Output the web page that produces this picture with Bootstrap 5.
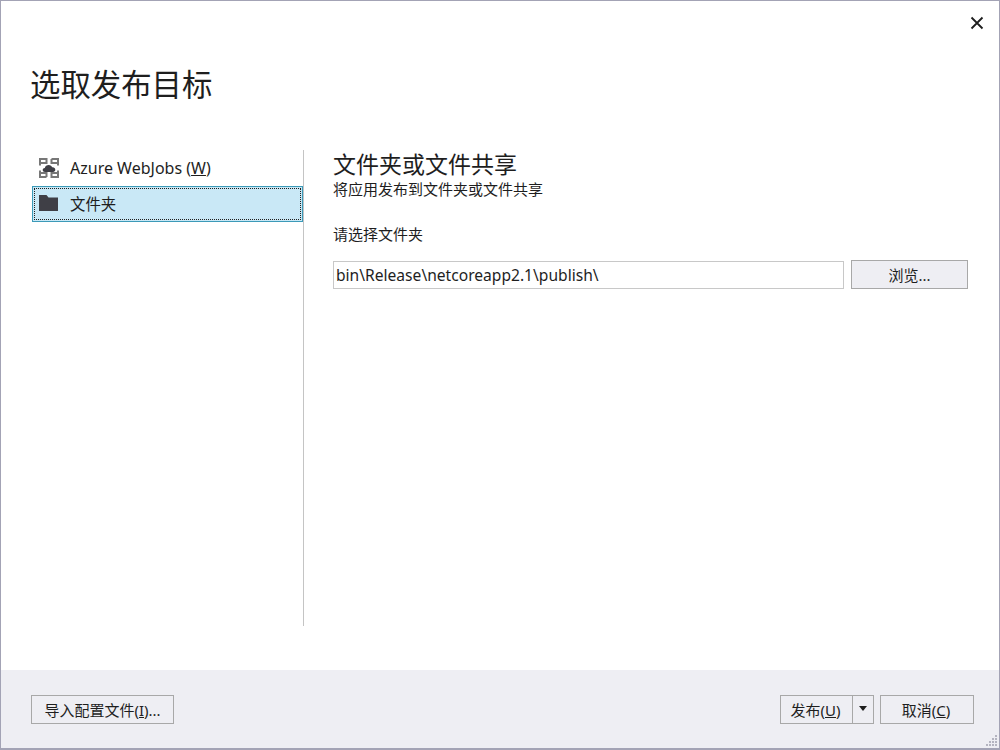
<!DOCTYPE html>
<html lang="zh-CN">
<head>
  <meta charset="UTF-8">
  <title>选取发布目标</title>
  <link href="https://cdn.jsdelivr.net/npm/bootstrap@5.3.3/dist/css/bootstrap.min.css" rel="stylesheet">
  <style>
    html, body { height: 100%; }
    body { margin: 0; background: #fff; color: #1e1e1e; font-family: "Noto Sans", "Noto Sans CJK SC", sans-serif; overflow: hidden; }
    .dlg-window { width: 1000px; height: 750px; border: 1px solid #a3a3b5; border-bottom-width: 2px; }
    .dlg-top { height: 149px; padding: 14px 14px 0 29px; }
    .dlg-close { background: none; border: 0; padding: 0; width: 16px; height: 16px; line-height: 0; }
    .dlg-title { font-size: 30.4px; line-height: 42px; font-weight: 400; margin: 33px 0 0; }
    .dlg-main { height: 520px; padding-left: 31px; }
    .target-list { width: 271px; }
    .target-item { height: 36px; font-size: 16px; gap: 9px; padding-left: 5px; color: #1e1e1e; line-height: 24px; }
    .target-item.picked { background: #c9e8f6; border: 1px solid #3c9ab8; outline: 1px dotted #1e1e1e; outline-offset: -3px; padding-left: 4px; font-size: 15.4px; }
    .target-item.picked span { position: relative; top: 1px; }
    .dlg-divider { width: 1px; height: 476px; background: #c4c4c4; }
    .dlg-pane { padding-left: 29px; width: 665px; }
    .pane-title { font-size: 23px; line-height: 30px; font-weight: 400; margin: -1px 0 1px; }
    .pane-sub { font-size: 15px; line-height: 20px; margin-top: -1px; }
    .pane-label { font-size: 15px; line-height: 20px; margin: 25px 0 16px; }
    .path-input { width: 511px; height: 28px; padding: 0 2px; border: 1px solid #c8c8c8; border-radius: 0; font-size: 15.6px; color: #1e1e1e; font-family: inherit; margin-top: 1px; }
    .path-input:focus { box-shadow: none; border-color: #c8c8c8; }
    .dlg-btn { background: #eeeef3; border: 1px solid #a8a8a8; border-radius: 0; height: 29px; padding: 0; font-size: 15px; line-height: 26px; color: #1e1e1e; }
    .btn-browse { width: 117px; margin-left: -1px; }
    .dlg-foot { height: 78px; background: #eeeef3; padding: 25px 25px 0 30px; position: relative; }
    .btn-import { width: 143px; }
    .btn-publish { width: 73px; padding-right: 2px; }
    .btn-caret { width: 21px; border-left: 0; }
    .btn-caret i { display: block; width: 0; height: 0; margin: 0 auto 3px; border: 4px solid transparent; border-top: 5px solid #1e1e1e; border-bottom: 0; }
    .btn-cancel { width: 94px; margin-left: 6px; padding-right: 2px; }
    .resize-grip { position: absolute; right: 1px; bottom: 1px; }
  </style>
</head>
<body>

<div class="dlg-window d-flex flex-column">
  <!-- title area -->
  <div class="dlg-top">
    <div class="d-flex justify-content-end">
      <button class="dlg-close" type="button" aria-label="Close">
        <svg width="14" height="14" viewBox="0 0 14 14"><path d="M1.500 1.500 L12.500 12.500 M12.500 1.500 L1.500 12.500" stroke="#1e1e1e" stroke-width="1.8" fill="none"/></svg>
      </button>
    </div>
    <h1 class="dlg-title">选取发布目标</h1>
  </div>

  <div class="dlg-main d-flex">
    <!-- targets -->
    <div class="target-list">
      <div class="target-item d-flex align-items-center">
        <svg width="24" height="24" viewBox="0 0 24 24">
          <g fill="none" stroke="#777" stroke-width="2">
            <path d="M3 9.500V3h6.500v4H3M14.500 3H21v6.500M14.500 3v4H21M21 14.500V21h-6.500v-4H21M9.500 21H3v-6.500M9.500 21v-4H3"/>
          </g>
          <path d="M8 16c-1.500 0-2.300-.9-2.300-2S6.600 12 7.800 12c.3-1.800 2-3 3.900-3 1.800 0 3 1 3.500 2.300 1.800-.2 3.100.9 3.100 2.500 0 1.300-.9 2.200-2.200 2.200z" fill="#3f3f46"/>
        </svg>
        <span>Azure WebJobs (<u>W</u>)</span>
      </div>
      <div class="target-item picked d-flex align-items-center">
        <svg width="24" height="24" viewBox="0 0 24 24">
          <path d="M2 3h7.500l2 2.500H21V19H2z" fill="#3f3f46"/>
        </svg>
        <span>文件夹</span>
      </div>
    </div>

    <div class="dlg-divider"></div>

    <!-- folder pane -->
    <div class="dlg-pane">
      <h2 class="pane-title">文件夹或文件共享</h2>
      <div class="pane-sub">将应用发布到文件夹或文件共享</div>
      <div class="pane-label">请选择文件夹</div>
      <div class="d-flex align-items-start gap-2">
        <input type="text" class="form-control path-input" value="bin\Release\netcoreapp2.1\publish\">
        <button class="btn dlg-btn btn-browse" type="button">浏览...</button>
      </div>
    </div>
  </div>

  <!-- footer buttons -->
  <div class="dlg-foot d-flex justify-content-between align-items-start">
    <button class="btn dlg-btn btn-import" type="button">导入配置文件(<u>I</u>)...</button>
    <div class="d-flex">
      <button class="btn dlg-btn btn-publish" type="button">发布(<u>U</u>)</button>
      <button class="btn dlg-btn btn-caret" type="button" aria-label="More"><i></i></button>
      <button class="btn dlg-btn btn-cancel" type="button">取消(<u>C</u>)</button>
    </div>
    <svg class="resize-grip" width="14" height="14" viewBox="0 0 14 14" fill="#b4b4c0">
      <rect x="11" y="2" width="2" height="2"/><rect x="8" y="5" width="2" height="2"/><rect x="11" y="5" width="2" height="2"/>
      <rect x="5" y="8" width="2" height="2"/><rect x="8" y="8" width="2" height="2"/><rect x="11" y="8" width="2" height="2"/>
      <rect x="2" y="11" width="2" height="2"/><rect x="5" y="11" width="2" height="2"/><rect x="8" y="11" width="2" height="2"/><rect x="11" y="11" width="2" height="2"/>
    </svg>
  </div>
</div>

<script src="https://cdn.jsdelivr.net/npm/bootstrap@5.3.3/dist/js/bootstrap.bundle.min.js"></script>
</body>
</html>
